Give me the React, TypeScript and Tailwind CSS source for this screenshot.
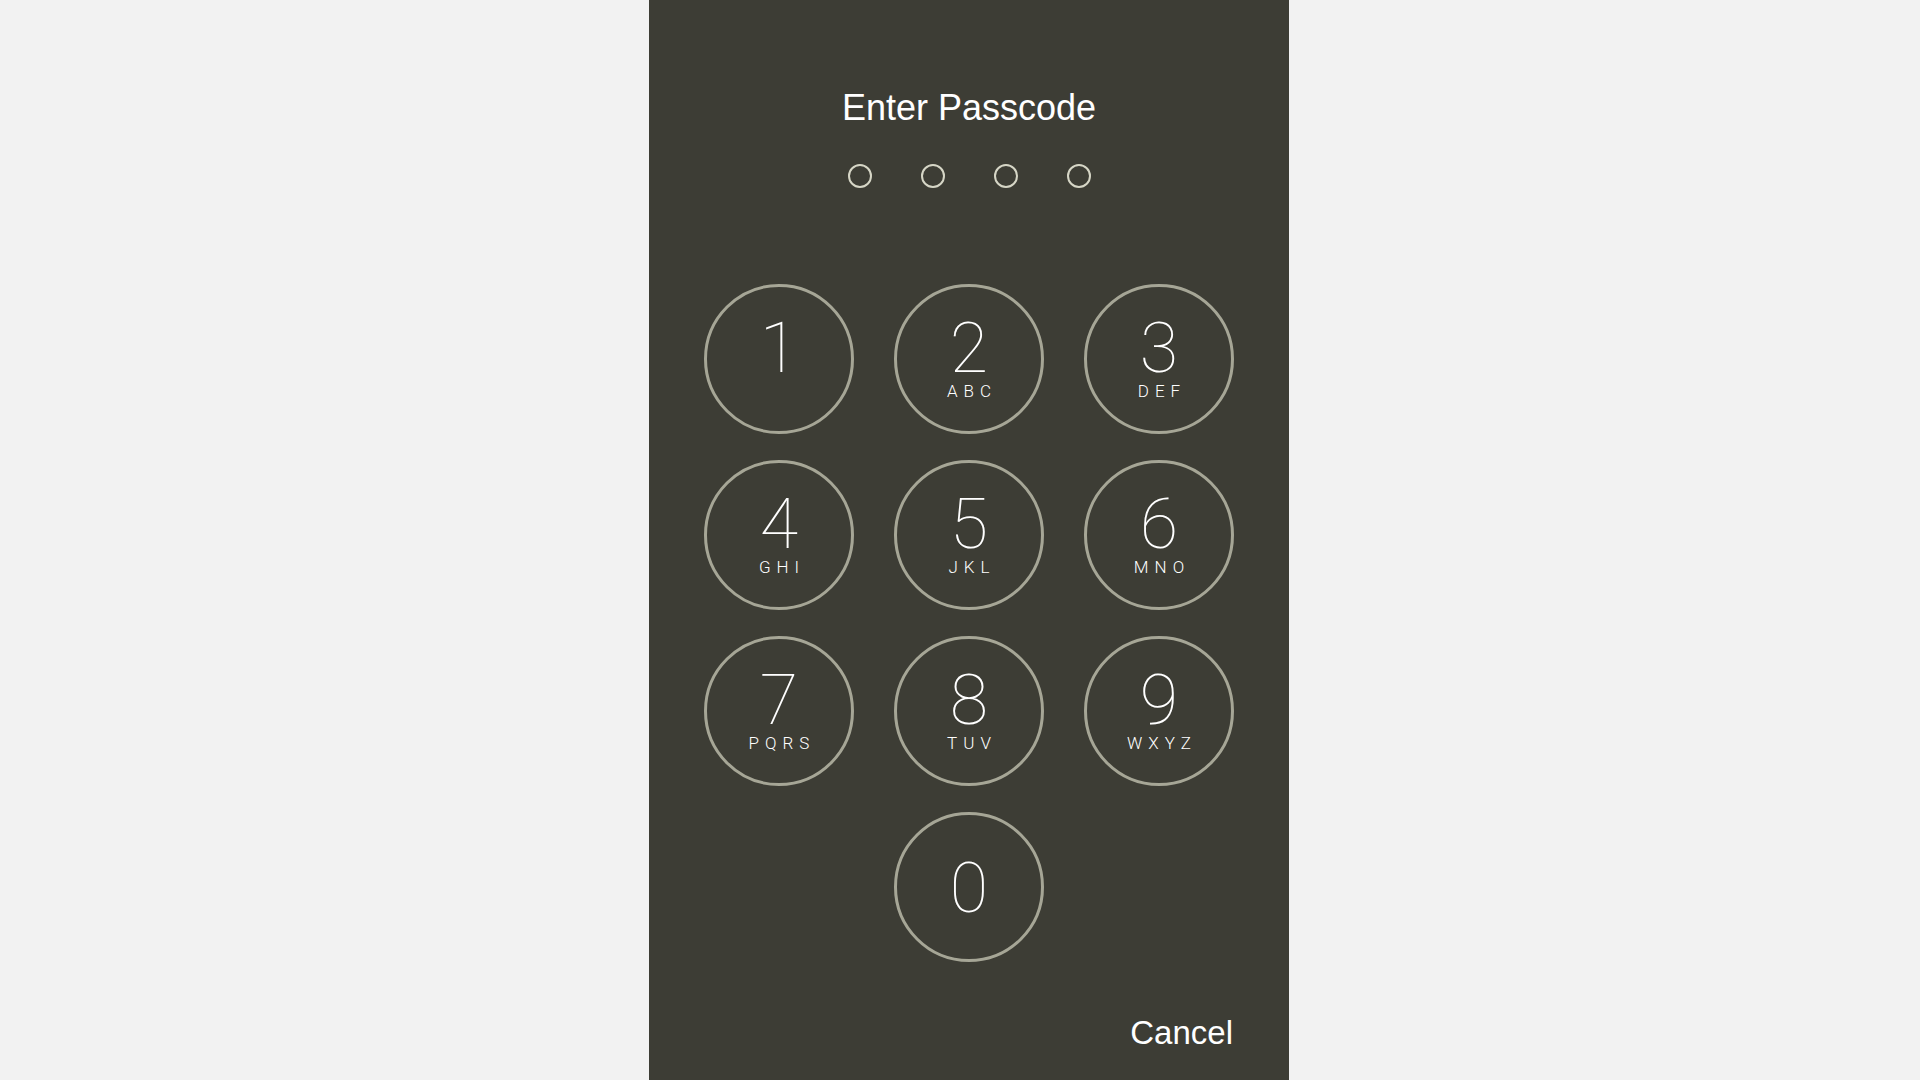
const keys = [
  { n: "1", l: "" },
  { n: "2", l: "ABC" },
  { n: "3", l: "DEF" },
  { n: "4", l: "GHI" },
  { n: "5", l: "JKL" },
  { n: "6", l: "MNO" },
  { n: "7", l: "PQRS" },
  { n: "8", l: "TUV" },
  { n: "9", l: "WXYZ" },
];

const Key = ({ n, l, center }: { n: string; l?: string; center?: boolean }) => {
  return (
    <button
      className={`w-[150px] h-[150px] rounded-full border-[3px] border-[#a6a696] flex flex-col items-center ${
        center ? "pt-[38px]" : "pt-[26px]"
      }`}
    >
      <span className="h-[70px] text-[70px] leading-none font-thin text-white font-['Roboto',sans-serif]">{n}</span>
      {l ? (
        <span className="pl-[6px] text-[17px] leading-none font-light tracking-[6px] text-white font-['Roboto',sans-serif]">
          {l}
        </span>
      ) : null}
    </button>
  );
};

export default function App() {
  return (
    <div className="h-screen w-full overflow-hidden bg-[#f2f2f2] flex pl-[649px]">
      <div className="w-[640px] h-[1080px] bg-[#3d3d35] flex flex-col items-center font-['Liberation_Sans',Arial,sans-serif]">
        {/* header */}
        <h1 className="mt-[90px] text-[36px] leading-none text-white">Enter Passcode</h1>
        <div className="mt-[38px] flex gap-[49px]">
          {[0, 1, 2, 3].map((i) => (
            <div key={i} className="w-6 h-6 rounded-full border-2 border-[#d6d6c6]" />
          ))}
        </div>

        {/* keypad */}
        <div className="mt-[96px] grid grid-cols-3 gap-x-[40px] gap-y-[26px]">
          {keys.map((k) => (
            <Key key={k.n} n={k.n} l={k.l} />
          ))}
          <div className="col-start-2">
            <Key n="0" center />
          </div>
        </div>

        <div className="w-[530px] mt-[54px] flex justify-end">
          <span className="text-[33px] leading-none text-white pr-[1px]">Cancel</span>
        </div>
      </div>
    </div>
  );
}
